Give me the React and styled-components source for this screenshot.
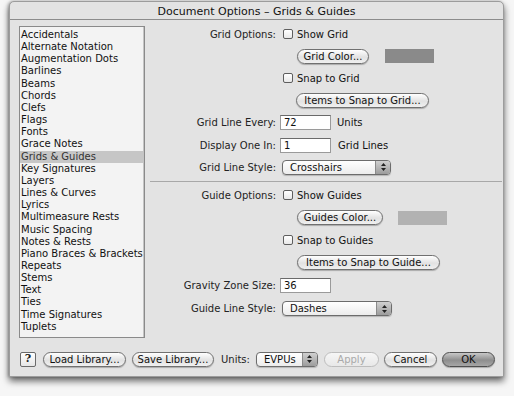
import React from "react";
import styled, { createGlobalStyle } from "styled-components";

const GlobalStyle = createGlobalStyle`
  html, body {
    margin: 0;
    padding: 0;
    background: #f6f6f6;
  }
  body {
    font-family: "DejaVu Sans", "Liberation Sans", sans-serif;
    font-size: 10px;
    color: #111;
  }
`;

const Desktop = styled.div`
  width: 514px;
  height: 396px;
  padding: 1px 10px 0 9px;
  box-sizing: border-box;
  overflow: hidden;
`;

const Window = styled.div`
  width: 495px;
  height: 376px;
  box-sizing: border-box;
  background: #e3e3e3;
  border: 1px solid #9c9c9c;
  border-radius: 5px 5px 0 0;
  box-shadow: 0 4px 7px rgba(0, 0, 0, 0.6), -1px 0 3px rgba(0, 0, 0, 0.25);
  display: flex;
  flex-direction: column;
`;

const TitleBar = styled.div`
  height: 16px;
  border-bottom: 1px solid #8c8c8c;
  display: flex;
  align-items: center;
  justify-content: center;
  font-size: 11px;
  color: #111;
  padding-top: 1px;
`;

const Body = styled.div`
  flex: 1;
  display: flex;
  padding: 0 0 0 9px;
  gap: 5px;
`;

const List = styled.div`
  width: 126px;
  height: 312px;
  margin-top: 6px;
  box-sizing: border-box;
  border: 1px solid #8a8a8a;
  background: #f3f3f3;
  display: flex;
`;

const ListItems = styled.div`
  flex: 1;
  padding-top: 2px;
`;

const ListStrip = styled.div`
  width: 8px;
  border-left: 1px solid #c4c4c4;
  background: #ececec;
`;

const Item = styled.div`
  height: 12.16px;
  line-height: 12px;
  padding-left: 1px;
  white-space: nowrap;
  background: ${(p) => (p.$selected ? "#c6c6c6" : "transparent")};
  color: ${(p) => (p.$selected ? "#333" : "#111")};
`;

const Panel = styled.div`
  flex: 1;
  display: flex;
  flex-direction: column;
  padding-top: 3px;
  padding-right: 3px;
`;

const Row = styled.div`
  height: ${(p) => p.$h || 22}px;
  display: grid;
  grid-template-columns: 126px 1fr;
  column-gap: 4px;
  align-items: center;
`;

const Label = styled.div`
  text-align: right;
  white-space: nowrap;
  color: #222;
`;

const Controls = styled.div`
  display: flex;
  align-items: center;
  gap: ${(p) => p.$gap || 5}px;
  padding-left: ${(p) => p.$indent || 0}px;
`;

const Separator = styled.div`
  height: 4px;
  border-bottom: 1px solid #a8a8a8;
  margin-bottom: 2px;
  margin-right: -2px;
`;

const CheckRow = styled.label`
  display: flex;
  align-items: center;
  gap: 4px;
  padding-left: 3px;
`;

const Box = styled.span`
  width: 10px;
  height: 10px;
  box-sizing: border-box;
  border: 1px solid #5e5e5e;
  border-radius: 2px;
  background: linear-gradient(#ffffff, #e8e8e8);
`;

const Pill = styled.button`
  width: ${(p) => p.$w}px;
  height: 15px;
  box-sizing: border-box;
  padding: 0;
  border: 1px solid ${(p) => (p.$disabled ? "#bdbdbd" : p.$default ? "#4e4e4e" : "#707070")};
  border-radius: 8px;
  font-family: inherit;
  font-size: 10px;
  line-height: 13px;
  color: ${(p) => (p.$disabled ? "#a9a9a9" : "#111")};
  background: ${(p) =>
    p.$default
      ? "linear-gradient(#c8c8c8, #8e8e8e 55%, #a6a6a6)"
      : p.$disabled
      ? "linear-gradient(#f6f6f6, #e8e8e8)"
      : "linear-gradient(#ffffff, #e2e2e2 55%, #f0f0f0)"};
  box-shadow: ${(p) => (p.$disabled ? "none" : "0 1px 1px rgba(0,0,0,0.25)")};
  white-space: nowrap;
`;

const Swatch = styled.span`
  width: 49px;
  height: 14px;
  background: ${(p) => p.$color};
  margin-left: ${(p) => p.$ml}px;
`;

const Field = styled.div`
  width: 51px;
  height: 15px;
  box-sizing: border-box;
  border: 1px solid #9a9a9a;
  border-top-color: #6a6a6a;
  background: #fff;
  padding-left: 3px;
  line-height: 13px;
`;

const Popup = styled.div`
  width: ${(p) => p.$w}px;
  height: 15px;
  box-sizing: border-box;
  border: 1px solid #6c6c6c;
  border-radius: 4px;
  background: linear-gradient(#ffffff, #ececec);
  box-shadow: 0 1px 1px rgba(0, 0, 0, 0.2);
  display: flex;
  margin-left: ${(p) => p.$ml || 0}px;
  overflow: hidden;
`;

const PopupText = styled.span`
  flex: 1;
  padding-left: 7px;
  line-height: 13px;
`;

const PopupArrows = styled.span`
  width: 14px;
  border-left: 1px solid #8a8a8a;
  background: linear-gradient(#d0d0d0, #9c9c9c);
  display: flex;
  align-items: center;
  justify-content: center;
`;

const BottomBar = styled.div`
  height: 30px;
  display: flex;
  align-items: center;
  padding: 0 0 2px 10px;
  gap: 6px;
`;

const Help = styled.button`
  width: 16px;
  height: 15px;
  box-sizing: border-box;
  padding: 0;
  border: 1px solid #6a6a6a;
  border-radius: 2px;
  background: linear-gradient(#ffffff, #e6e6e6);
  font-family: "DejaVu Serif", serif;
  font-weight: bold;
  font-size: 11px;
  line-height: 12px;
  color: #222;
  margin-right: 1px;
`;

const UnitsLabel = styled.span`
  color: #222;
  margin-left: 1px;
`;

const Arrows = () => (
  <svg width="7" height="10" viewBox="0 0 7 10">
    <path d="M3.5 1 L6 4 L1 4 Z M3.5 9 L6 6 L1 6 Z" fill="#222" />
  </svg>
);

const Check = ({ children }) => (
  <CheckRow>
    <Box />
    <span>{children}</span>
  </CheckRow>
);

const items = [
  "Accidentals",
  "Alternate Notation",
  "Augmentation Dots",
  "Barlines",
  "Beams",
  "Chords",
  "Clefs",
  "Flags",
  "Fonts",
  "Grace Notes",
  "Grids & Guides",
  "Key Signatures",
  "Layers",
  "Lines & Curves",
  "Lyrics",
  "Multimeasure Rests",
  "Music Spacing",
  "Notes & Rests",
  "Piano Braces & Brackets",
  "Repeats",
  "Stems",
  "Text",
  "Ties",
  "Time Signatures",
  "Tuplets",
];

export default function App() {
  return (
    <>
      <GlobalStyle />
      <Desktop>
        <Window>
          <TitleBar>Document Options – Grids &amp; Guides</TitleBar>
          <Body>
            <List>
              <ListItems>
                {items.map((it) => (
                  <Item key={it} $selected={it === "Grids & Guides"}>
                    {it}
                  </Item>
                ))}
              </ListItems>
              <ListStrip />
            </List>
            <Panel>
              <Row>
                <Label>Grid Options:</Label>
                <Check>Show Grid</Check>
              </Row>
              <Row>
                <span />
                <Controls $indent={17} $gap={0}>
                  <Pill $w={72}>Grid Color...</Pill>
                  <Swatch $color="#8a8a8a" $ml={11} />
                </Controls>
              </Row>
              <Row>
                <span />
                <Check>Snap to Grid</Check>
              </Row>
              <Row>
                <span />
                <Controls $indent={16}>
                  <Pill $w={133}>Items to Snap to Grid...</Pill>
                </Controls>
              </Row>
              <Row $h={23}>
                <Label>Grid Line Every:</Label>
                <Controls $gap={6}>
                  <Field>72</Field>
                  <span>Units</span>
                </Controls>
              </Row>
              <Row $h={23}>
                <Label>Display One In:</Label>
                <Controls $gap={7}>
                  <Field>1</Field>
                  <span>Grid Lines</span>
                </Controls>
              </Row>
              <Row $h={20}>
                <Label>Grid Line Style:</Label>
                <Controls>
                  <Popup $w={109} $ml={2}>
                    <PopupText>Crosshairs</PopupText>
                    <PopupArrows>
                      <Arrows />
                    </PopupArrows>
                  </Popup>
                </Controls>
              </Row>
              <Separator />
              <Row>
                <Label>Guide Options:</Label>
                <Check>Show Guides</Check>
              </Row>
              <Row $h={23}>
                <span />
                <Controls $indent={17} $gap={0}>
                  <Pill $w={86}>Guides Color...</Pill>
                  <Swatch $color="#b2b2b2" $ml={10} />
                </Controls>
              </Row>
              <Row>
                <span />
                <Check>Snap to Guides</Check>
              </Row>
              <Row>
                <span />
                <Controls $indent={17}>
                  <Pill $w={143}>Items to Snap to Guide...</Pill>
                </Controls>
              </Row>
              <Row $h={24}>
                <Label>Gravity Zone Size:</Label>
                <Controls>
                  <Field>36</Field>
                </Controls>
              </Row>
              <Row $h={23}>
                <Label>Guide Line Style:</Label>
                <Controls>
                  <Popup $w={110} $ml={2}>
                    <PopupText>Dashes</PopupText>
                    <PopupArrows>
                      <Arrows />
                    </PopupArrows>
                  </Popup>
                </Controls>
              </Row>
            </Panel>
          </Body>
          <BottomBar>
            <Help>?</Help>
            <Pill $w={83}>Load Library...</Pill>
            <Pill $w={82}>Save Library...</Pill>
            <UnitsLabel>Units:</UnitsLabel>
            <Popup $w={62}>
              <PopupText>EVPUs</PopupText>
              <PopupArrows>
                <Arrows />
              </PopupArrows>
            </Popup>
            <Pill $w={55} $disabled>
              Apply
            </Pill>
            <Pill $w={53} style={{ marginLeft: -1 }}>
              Cancel
            </Pill>
            <Pill $w={53} $default style={{ marginLeft: -1 }}>
              OK
            </Pill>
          </BottomBar>
        </Window>
      </Desktop>
    </>
  );
}
